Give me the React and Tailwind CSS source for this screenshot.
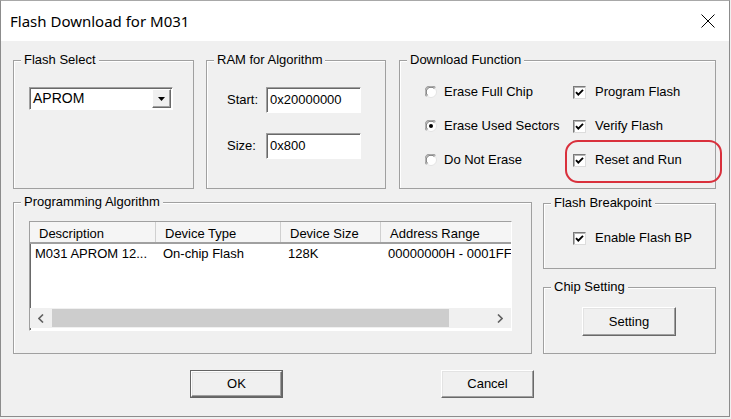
import React from "react";

// etched group box, label sits on the top border
const Group = ({ title, className, children }) => (
  <div className={"relative border border-[#a0a0a0] shadow-[inset_1px_1px_0_#fff] " + className}>
    <span className="absolute left-[7px] top-[-9px] bg-[#f0f0f0] px-[3px] leading-[16px]">{title}</span>
    {children}
  </div>
);

const Check = () => (
  <span className="flex h-[13px] w-[13px] items-center justify-center border border-t-[#7a7a7a] border-l-[#7a7a7a] border-r-[#dcdcdc] border-b-[#dcdcdc] bg-white shadow-[inset_1px_1px_0_#b4b4b4]">
    <svg width="9" height="9" viewBox="0 0 9 9">
      <path d="M1 4.2 L3.3 6.6 L8 1.8" stroke="#000" strokeWidth="1.9" fill="none" />
    </svg>
  </span>
);

const Radio = ({ on }) => (
  <svg width="12" height="12" viewBox="0 0 12 12">
    <circle cx="6" cy="6" r="5.5" fill="#fff" stroke="#e3e3e3" />
    <path d="M1.6 10.4 A6 6 0 0 1 10.4 1.6" stroke="#a0a0a0" strokeWidth="1.2" fill="none" />
    <path d="M2.6 9.4 A4.8 4.8 0 0 1 9.4 2.6" stroke="#707070" strokeWidth="1" fill="none" />
    {on && <circle cx="6" cy="6" r="2" fill="#000" />}
  </svg>
);

const Button = ({ label, className }) => (
  <button className={"flex items-center justify-center border border-t-white border-l-white border-r-[#696969] border-b-[#696969] bg-[#f0f0f0] shadow-[inset_-1px_-1px_0_#a0a0a0,inset_1px_1px_0_#e3e3e3] " + className}>
    {label}
  </button>
);

const Sunken = ({ className, children }) => (
  <div className={"border border-t-[#a0a0a0] border-l-[#a0a0a0] border-r-white border-b-white bg-white shadow-[inset_1px_1px_0_#696969] " + className}>
    {children}
  </div>
);

const rows = [
  ["Erase Full Chip", false, "Program Flash"],
  ["Erase Used Sectors", true, "Verify Flash"],
  ["Do Not Erase", false, "Reset and Run"],
];

const cols = [
  ["Description", "M031 APROM 12...", "w-[126px]"],
  ["Device Type", "On-chip Flash", "w-[125px]"],
  ["Device Size", "128K", "w-[100px]"],
  ["Address Range", "00000000H - 0001FFFFH", "w-[140px]"],
];

export default function App() {
  return (
    <div className="relative h-[419px] w-[731px] overflow-hidden bg-[#f0f0f0] font-['Liberation_Sans',Arial,sans-serif] text-[13px] text-black">
      <div className="flex h-[417px] w-[730px] flex-col border border-[#8c8c8c] border-t-[#a8a8a8]">
        {/* title bar */}
        <div className="flex h-[40px] items-center justify-between bg-white pl-[9px] pr-[14px] font-['Segoe_UI','Noto_Sans',sans-serif] text-[15px]">
          <span>Flash Download for M031</span>
          <svg width="14" height="14" viewBox="0 0 14 14">
            <path d="M0.5 0.5 L13.5 13.5 M13.5 0.5 L0.5 13.5" stroke="#000" strokeWidth="1" />
          </svg>
        </div>

        <div className="flex flex-col px-[12px] pt-[19px]">
          {/* top row */}
          <div className="flex">
            <Group title="Flash Select" className="h-[129px] w-[181px] pl-[15px] pt-[26px]">
              <Sunken className="flex h-[23px] w-[144px] items-center justify-between pl-[3px] pr-[1px]">
                <span className="text-[14px]">APROM</span>
                <span className="flex h-[19px] w-[19px] items-center justify-center border border-t-white border-l-white border-r-[#696969] border-b-[#696969] bg-[#f0f0f0] shadow-[inset_-1px_-1px_0_#a0a0a0]">
                  <svg width="7" height="4" viewBox="0 0 7 4">
                    <path d="M0 0 H7 L3.5 4 Z" fill="#000" />
                  </svg>
                </span>
              </Sunken>
            </Group>

            <Group title="RAM for Algorithm" className="ml-[12px] h-[129px] w-[180px] pl-[20px] pt-[26px]">
              <div className="flex flex-col gap-[20px]">
                <div className="flex items-center">
                  <span className="w-[39px]">Start:</span>
                  <Sunken className="flex h-[26px] w-[95px] items-start pl-[3px] pt-[2px]">0x20000000</Sunken>
                </div>
                <div className="flex items-center">
                  <span className="w-[39px]">Size:</span>
                  <Sunken className="flex h-[26px] w-[95px] items-start pl-[3px] pt-[2px]">0x800</Sunken>
                </div>
              </div>
            </Group>

            <Group title="Download Function" className="ml-[13px] h-[129px] w-[317px] pl-[25px] pt-[21px]">
              <div className="flex flex-col gap-[14px]">
                {rows.map(([r, on, c]) => (
                  <div key={r} className="flex h-[20px] items-center">
                    <div className="flex w-[148px] items-center gap-[7px]">
                      <Radio on={on} />
                      <span>{r}</span>
                    </div>
                    <div className="flex items-center gap-[9px]">
                      <Check />
                      <span>{c}</span>
                    </div>
                  </div>
                ))}
              </div>
            </Group>
          </div>

          {/* middle row */}
          <div className="mt-[13px] flex">
            <Group title="Programming Algorithm" className="h-[152px] w-[519px] pl-[15px] pt-[18px]">
              <Sunken className="flex h-[110px] w-[483px] flex-col overflow-hidden">
                <div className="flex h-[22px] shrink-0 border-b-2 border-[#a0a0a0] bg-[#f5f5f5]">
                  {cols.map(([h, , w]) => (
                    <div key={h} className={"flex shrink-0 items-center border-r border-[#d0d0d0] pl-[9px] pt-[3px] " + w}>
                      {h}
                    </div>
                  ))}
                </div>
                <div className="flex flex-1 items-start">
                  {cols.map(([h, v, w], i) => (
                    <div key={h} className={"shrink-0 overflow-hidden whitespace-nowrap " + w + (i === 0 ? " pl-[5px]" : " pl-[7px]")}>
                      {v}
                    </div>
                  ))}
                </div>
                <div className="mb-[2px] flex h-[20px] shrink-0 items-center bg-[#f0f0f0]">
                  <span className="flex w-[22px] justify-center">
                    <svg width="6" height="9" viewBox="0 0 6 9"><path d="M5 0.5 L1 4.5 L5 8.5" stroke="#606060" strokeWidth="1.6" fill="none" /></svg>
                  </span>
                  <span className="h-[18px] w-[397px] bg-[#cdcdcd]" />
                  <span className="flex-1" />
                  <span className="flex w-[22px] justify-center">
                    <svg width="6" height="9" viewBox="0 0 6 9"><path d="M1 0.5 L5 4.5 L1 8.5" stroke="#606060" strokeWidth="1.6" fill="none" /></svg>
                  </span>
                </div>
              </Sunken>
            </Group>

            <div className="ml-[11px] flex flex-col">
              <Group title="Flash Breakpoint" className="mt-[1px] h-[66px] w-[173px] pl-[29px] pt-[24px]">
                <div className="flex h-[20px] items-center gap-[9px]">
                  <Check />
                  <span>Enable Flash BP</span>
                </div>
              </Group>
              <Group title="Chip Setting" className="mt-[18px] h-[67px] w-[173px] pl-[38px] pt-[19px]">
                <Button label="Setting" className="h-[29px] w-[94px]" />
              </Group>
            </div>
          </div>

          {/* buttons */}
          <div className="mt-[16px] flex pl-[177px]">
            <div className="border border-[#646464]">
              <Button label="OK" className="h-[26px] w-[91px]" />
            </div>
            <Button label="Cancel" className="ml-[158px] h-[28px] w-[93px]" />
          </div>
        </div>
      </div>

      {/* annotation */}
      <div className="absolute left-[565px] top-[140px] h-[43px] w-[157px] rounded-[13px] border-2 border-[#d9303c]" />
    </div>
  );
}
